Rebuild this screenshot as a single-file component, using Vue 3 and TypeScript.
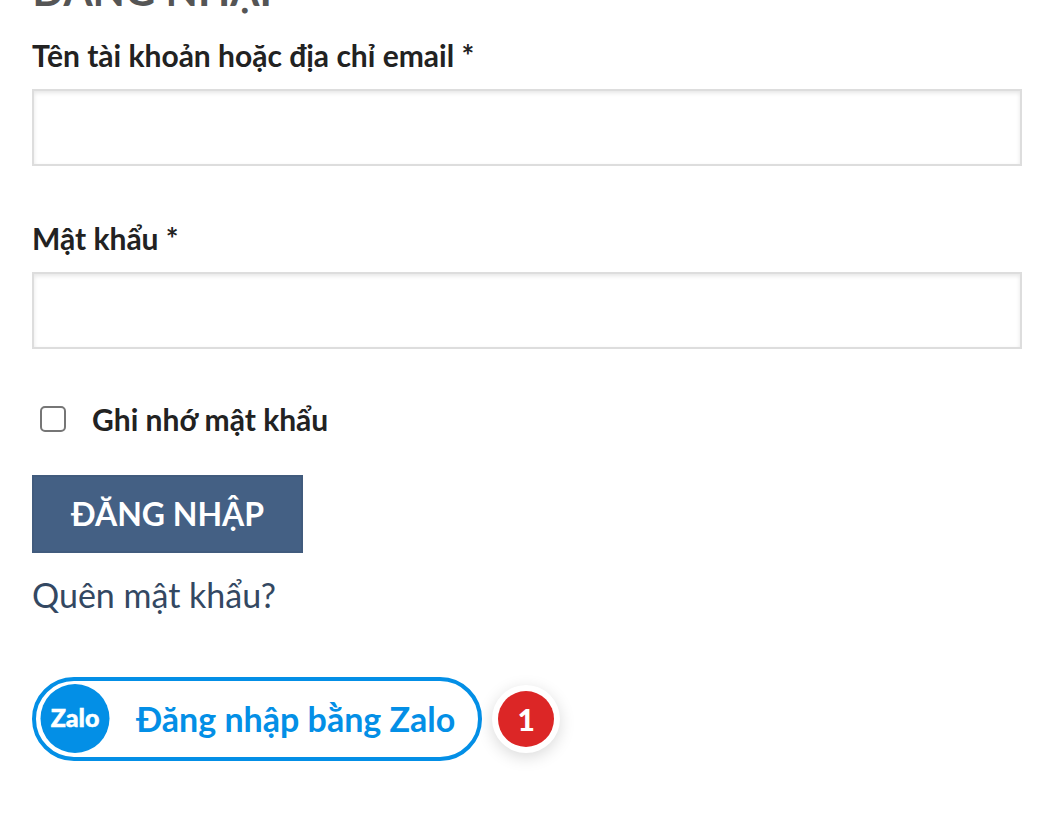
<script setup lang="ts">
import { ref } from 'vue'

const username = ref<string>('')
const password = ref<string>('')
const remember = ref<boolean>(false)
const loginCount: number = 1
</script>

<template>
  <main class="page">
    <h3 class="title">Đăng nhập</h3>
    <form class="login" @submit.prevent>
      <div class="field">
        <label class="label" for="username">Tên tài khoản hoặc địa chỉ email&nbsp;*</label>
        <input id="username" v-model="username" class="input" type="text" autocomplete="username" />
      </div>
      <div class="field">
        <label class="label" for="password">Mật khẩu&nbsp;*</label>
        <input id="password" v-model="password" class="input" type="password" autocomplete="current-password" />
      </div>
      <div class="remember">
        <input id="remember" v-model="remember" class="check" type="checkbox" />
        <label class="label" for="remember">Ghi nhớ mật khẩu</label>
      </div>
      <button class="submit" type="submit">Đăng nhập</button>
      <a class="lost" href="#">Quên mật khẩu?</a>
      <div class="social">
        <button class="zalo" type="button">
          <svg class="zalo-logo" viewBox="0 0 70 70" aria-hidden="true">
            <circle cx="35" cy="34.5" r="34.5" fill="#038fe6" />
            <text class="zalo-word" x="35" y="43" text-anchor="middle">Zalo</text>
          </svg>
          <span>Đăng nhập bằng Zalo</span>
        </button>
        <span class="badge">{{ loginCount }}</span>
      </div>
    </form>
  </main>
</template>

<style>
body {
  margin: 0;
  background: #fff;
}
</style>

<style scoped>
.page {
  box-sizing: border-box;
  padding: 0 32px 64px;
  overflow: hidden;
  font-family: Lato, "Noto Sans", sans-serif;
  color: #222;
}

.title {
  margin: -36px 0 15px;
  font-size: 42px;
  line-height: 52px;
  font-weight: 700;
  text-transform: uppercase;
  color: #555;
}

.login {
  display: flex;
  flex-direction: column;
  align-items: flex-start;
}

.field {
  display: flex;
  flex-direction: column;
  align-self: stretch;
  gap: 10px;
  margin-bottom: 48px;
}

.label {
  font-size: 30px;
  line-height: 48px;
  font-weight: 700;
}

.input {
  box-sizing: border-box;
  width: 100%;
  height: 77px;
  margin: 0;
  padding: 0 24px;
  border: 2px solid #ddd;
  border-radius: 0;
  background: #fff;
  box-shadow: inset 0 2px 4px rgba(0, 0, 0, 0.1);
  font: inherit;
  font-size: 32px;
  color: #333;
  outline: none;
}

.remember {
  display: flex;
  align-items: center;
  gap: 26px;
  padding-left: 8px;
  margin: -2px 0 32px;
}

.check {
  appearance: none;
  box-sizing: border-box;
  width: 26px;
  height: 26px;
  margin: 0;
  border: 2px solid #767676;
  border-radius: 5px;
  background: #fff;
}

.check:checked {
  border-color: #446084;
  background: #446084;
}

.submit {
  box-sizing: border-box;
  height: 78px;
  padding: 0 37px;
  border: 2px solid #415b7d;
  background: #446084;
  font: inherit;
  font-size: 32px;
  line-height: 48px;
  font-weight: 700;
  text-transform: uppercase;
  color: #fff;
}

.lost {
  margin: 16px 0 56px;
  font-size: 34px;
  line-height: 52px;
  font-weight: 400;
  text-decoration: none;
  color: #334862;
}

.social {
  display: flex;
  align-items: center;
  gap: 16px;
}

.zalo {
  box-sizing: border-box;
  display: flex;
  align-items: center;
  gap: 26px;
  height: 84px;
  padding: 0 23px 0 4px;
  border: 4px solid #038fe6;
  border-radius: 42px;
  background: #fff;
  font: inherit;
  font-size: 34px;
  line-height: 52px;
  font-weight: 700;
  color: #038fe6;
}

.zalo-logo {
  width: 70px;
  height: 70px;
}

.zalo-word {
  font-family: Lato, sans-serif;
  font-size: 25px;
  font-weight: 900;
  fill: #fff;
  stroke: #fff;
  stroke-width: 0.5px;
}

.badge {
  width: 56px;
  height: 56px;
  border-radius: 50%;
  background: #dc2626;
  box-shadow: 0 0 0 6px #fff, 0 4px 16px 6px rgba(0, 0, 0, 0.15);
  font-size: 30px;
  line-height: 56px;
  font-weight: 900;
  text-align: center;
  color: #fff;
}
</style>
